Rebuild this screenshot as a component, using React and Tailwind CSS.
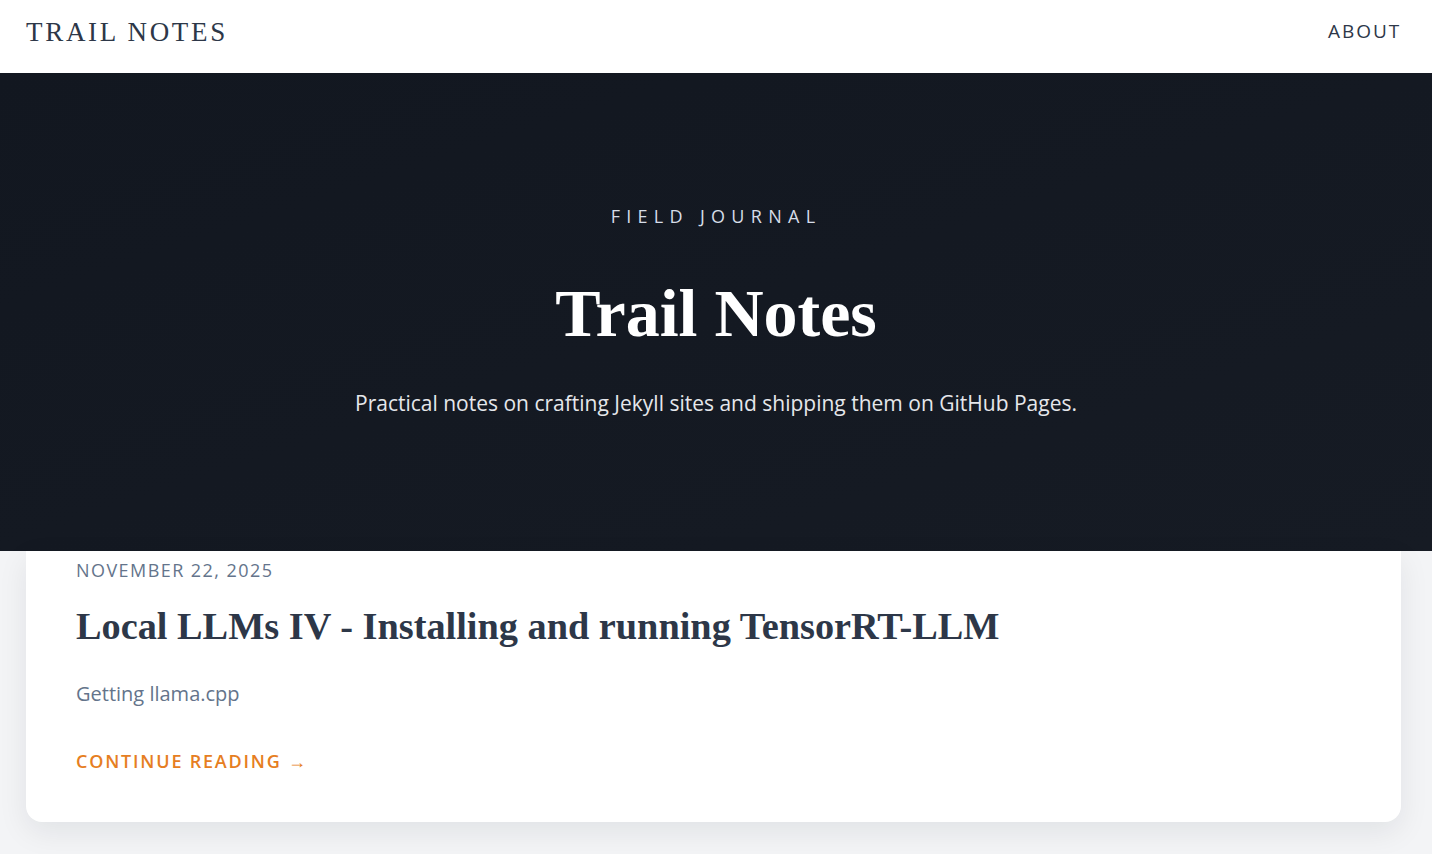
import React from 'react';

const serif = { fontFamily: '"Liberation Serif", "DejaVu Serif", serif' };

const Header = () => (
    <header className="flex h-[73px] items-center justify-between bg-white pb-[8px] pl-[26px] pr-[31px]">
        <a className="text-[27px] tracking-[0.1em] text-[#2d3748]" style={serif}>
            TRAIL NOTES
        </a>
        <nav className="pb-[3px] text-[19px] tracking-[0.1em] text-[#2d3748]">ABOUT</nav>
    </header>
);

const Hero = () => (
    <section className="flex h-[478px] flex-col items-center bg-gradient-to-br from-[#121720] to-[#161b24] pt-[130px] text-center">
        <p className="text-[18px] tracking-[0.35em] text-[#d6dde8]">FIELD JOURNAL</p>
        <h1 className="mt-[49px] text-[68px] font-bold leading-none text-white" style={serif}>
            Trail Notes
        </h1>
        <p className="mt-[41px] text-[21px] text-[#e5e7eb]">
            Practical notes on crafting Jekyll sites and shipping them on GitHub Pages.
        </p>
    </section>
);

const PostCard = () => (
    <article className="ml-[26px] mr-[31px] rounded-b-2xl bg-white px-[50px] pb-[47px] pt-[6px] shadow-[0_10px_30px_rgba(15,23,42,0.08)]">
        <p className="text-[18px] tracking-[0.08em] text-[#64748b]">NOVEMBER 22, 2025</p>
        <h2 className="mt-[19px] text-[38.3px] font-bold leading-tight text-[#2d3748]" style={serif}>
            Local LLMs IV - Installing and running TensorRT-LLM
        </h2>
        <p className="mt-[28px] text-[20px] text-[#64748b]">Getting llama.cpp</p>
        <a className="mt-[39px] inline-block text-[18px] font-semibold tracking-[0.1em] text-[#e67e22]">
            CONTINUE READING <span className="font-normal">→</span>
        </a>
    </article>
);

export default function App() {
    return (
        <div className="min-h-screen bg-[#f3f4f6] pb-[40px]" style={{ fontFamily: '"Open Sans", sans-serif' }}>
            <Header />
            <Hero />
            <PostCard />
        </div>
    );
}
